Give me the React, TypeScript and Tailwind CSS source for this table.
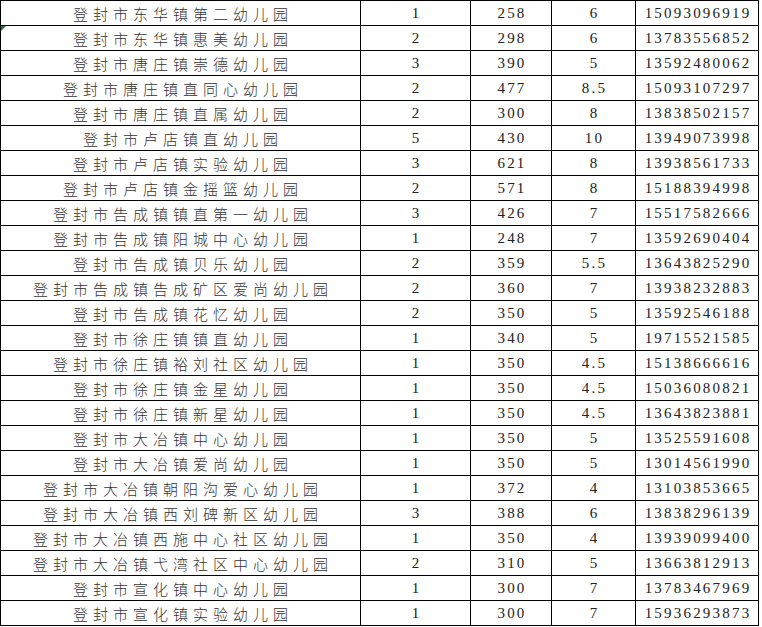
import React from "react";

const rows: [string, string, string, string, string][] = [
  ["登封市东华镇第二幼儿园", "1", "258", "6", "15093096919"],
  ["登封市东华镇惠美幼儿园", "2", "298", "6", "13783556852"],
  ["登封市唐庄镇崇德幼儿园", "3", "390", "5", "13592480062"],
  ["登封市唐庄镇直同心幼儿园", "2", "477", "8.5", "15093107297"],
  ["登封市唐庄镇直属幼儿园", "2", "300", "8", "13838502157"],
  ["登封市卢店镇直幼儿园", "5", "430", "10", "13949073998"],
  ["登封市卢店镇实验幼儿园", "3", "621", "8", "13938561733"],
  ["登封市卢店镇金摇篮幼儿园", "2", "571", "8", "15188394998"],
  ["登封市告成镇镇直第一幼儿园", "3", "426", "7", "15517582666"],
  ["登封市告成镇阳城中心幼儿园", "1", "248", "7", "13592690404"],
  ["登封市告成镇贝乐幼儿园", "2", "359", "5.5", "13643825290"],
  ["登封市告成镇告成矿区爱尚幼儿园", "2", "360", "7", "13938232883"],
  ["登封市告成镇花忆幼儿园", "2", "350", "5", "13592546188"],
  ["登封市徐庄镇镇直幼儿园", "1", "340", "5", "19715521585"],
  ["登封市徐庄镇裕刘社区幼儿园", "1", "350", "4.5", "15138666616"],
  ["登封市徐庄镇金星幼儿园", "1", "350", "4.5", "15036080821"],
  ["登封市徐庄镇新星幼儿园", "1", "350", "4.5", "13643823881"],
  ["登封市大冶镇中心幼儿园", "1", "350", "5", "13525591608"],
  ["登封市大冶镇爱尚幼儿园", "1", "350", "5", "13014561990"],
  ["登封市大冶镇朝阳沟爱心幼儿园", "1", "372", "4", "13103853665"],
  ["登封市大冶镇西刘碑新区幼儿园", "3", "388", "6", "13838296139"],
  ["登封市大冶镇西施中心社区幼儿园", "1", "350", "4", "13939099400"],
  ["登封市大冶镇弋湾社区中心幼儿园", "2", "310", "5", "13663812913"],
  ["登封市宣化镇中心幼儿园", "1", "300", "7", "13783467969"],
  ["登封市宣化镇实验幼儿园", "1", "300", "7", "15936293873"],
];

const numCell =
  "h-[25px] border-r border-b border-black flex items-center justify-center pl-[2px] tracking-[2.2px] text-[15px] text-[#222] font-['Liberation_Serif',serif]";

export default function App() {
  return (
    <div className="w-[762px] h-[627px] bg-white overflow-hidden">
      <div className="grid grid-cols-[360px_110px_81px_84px_123px] w-[759px] border-l border-t border-black">
        {rows.map((r, i) => (
          <React.Fragment key={i}>
            <div className="relative h-[25px] border-r border-b border-black flex items-center justify-center pl-[5px] tracking-[5px] text-[15px] leading-none text-[#333] font-light font-['Noto_Sans_CJK_SC',sans-serif]">
              {i === 1 && (
                <span className="absolute left-0 top-0 w-0 h-0 border-t-[5px] border-t-[#1e7b34] border-r-[5px] border-r-transparent" />
              )}
              {r[0]}
            </div>
            <div className={numCell}>{r[1]}</div>
            <div className={numCell}>{r[2]}</div>
            <div className={numCell}>{r[3]}</div>
            <div className={numCell}>{r[4]}</div>
          </React.Fragment>
        ))}
      </div>
    </div>
  );
}
